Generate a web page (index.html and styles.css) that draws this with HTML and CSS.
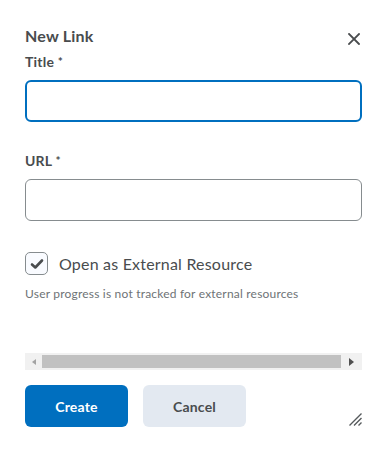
FILE: index.html
```html
<!DOCTYPE html>
<html lang="en">
  <head>
    <meta charset="UTF-8" />
    <meta name="viewport" content="width=device-width, initial-scale=1.0" />
    <title>New Link</title>
    <link rel="stylesheet" href="styles.css">
  </head>
  <body>
    <div class="dialog">
      <div class="dialog-header">
        <h2>New Link</h2>
        <button class="close-btn" aria-label="Close">
          <svg width="12" height="12" viewBox="0 0 12 12">
            <path d="M1 1 L11 11 M11 1 L1 11" stroke="#494c4e" stroke-width="1.8" stroke-linecap="square" />
          </svg>
        </button>
      </div>

      <label class="field-label" for="title">Title <span class="req">*</span></label>
      <input id="title" class="text-input focused" type="text" />

      <label class="field-label url-label" for="url">URL <span class="req">*</span></label>
      <input id="url" class="text-input" type="text" />

      <div class="check-row">
        <span class="checkbox">
          <svg width="14" height="12" viewBox="0 0 14 12">
            <path d="M2 6.5 L5.3 9.5 L12 2.5" fill="none" stroke="#494c4e" stroke-width="2.6" stroke-linecap="round" stroke-linejoin="round" />
          </svg>
        </span>
        <span class="check-label">Open as External Resource</span>
      </div>
      <p class="helper">User progress is not tracked for external resources</p>

      <div class="hscroll">
        <span class="arrow left"></span>
        <span class="thumb"></span>
        <span class="arrow right"></span>
      </div>

      <div class="footer">
        <button class="btn primary">Create</button>
        <button class="btn secondary">Cancel</button>
        <svg class="resize" width="13" height="13" viewBox="0 0 13 13">
          <path d="M0.5 12.5 L12.5 0.5 M5 12.5 L12.5 5 M9.5 12.5 L12.5 9.5" stroke="#565a5c" stroke-width="1.4" />
        </svg>
      </div>
    </div>
  </body>
</html>
```

FILE: styles.css
```css
:root {
  --text: #494c4e;
  --muted: #6e7376;
  --blue: #006fbf;
  --border: #868c8f;
  --cancel-bg: #e3e9f1;
}

* {
  margin: 0;
  padding: 0;
  box-sizing: border-box;
  font-family: Lato, "Noto Sans", sans-serif;
}

body {
  background: #ffffff;
  color: var(--text);
  letter-spacing: 0.2px;
}

.dialog {
  padding: 26px 27px 0 25px;
}

.dialog-header {
  display: flex;
  justify-content: space-between;
  align-items: flex-start;
}

.dialog-header h2 {
  font-size: 16px;
  font-weight: 700;
  line-height: 19px;
}

.close-btn {
  background: none;
  border: none;
  margin-top: 7px;
  margin-right: 2px;
  display: flex;
}

.field-label {
  display: block;
  margin-top: 8px;
  font-size: 14px;
  font-weight: 700;
  line-height: 17px;
}

.field-label .req {
  font-size: 12px;
  vertical-align: 1px;
}

.url-label {
  margin-top: 30px;
}

.text-input {
  display: block;
  width: 100%;
  height: 42px;
  margin-top: 10px;
  border: 1px solid var(--border);
  border-radius: 6px;
  background: #fff;
}

.text-input.focused {
  border: 2px solid var(--blue);
}

.check-row {
  display: flex;
  align-items: center;
  gap: 11px;
  margin-top: 31px;
}

.checkbox {
  width: 23px;
  height: 23px;
  border: 1px solid var(--border);
  border-radius: 5px;
  background: #f9fbff;
  display: flex;
  align-items: center;
  justify-content: center;
}

.check-label {
  font-size: 16px;
  line-height: 22px;
}

.helper {
  margin-top: 12px;
  font-size: 12px;
  line-height: 14px;
  color: var(--muted);
}

.hscroll {
  margin-top: 52px;
  height: 17px;
  background: #f1f1f1;
  display: flex;
  align-items: center;
}

.hscroll .thumb {
  flex: 1;
  height: 13px;
  background: #c1c1c1;
}

.hscroll .arrow {
  width: 17px;
  display: flex;
  justify-content: center;
}

.hscroll .arrow.left::before {
  content: "";
  border-top: 3.5px solid transparent;
  border-bottom: 3.5px solid transparent;
  border-right: 4px solid #a3a3a3;
}

.hscroll .arrow.right {
  width: 21px;
}

.hscroll .arrow.right::before {
  content: "";
  border-top: 4px solid transparent;
  border-bottom: 4px solid transparent;
  border-left: 5px solid #505050;
}

.footer {
  display: flex;
  gap: 15px;
  margin-top: 15px;
}

.btn {
  width: 103px;
  height: 42px;
  border: none;
  border-radius: 6px;
  font-size: 14px;
  font-weight: 700;
  letter-spacing: 0.2px;
}

.btn.primary {
  background: var(--blue);
  color: #fff;
}

.btn.secondary {
  background: var(--cancel-bg);
  color: var(--text);
}

.resize {
  margin-left: auto;
  align-self: flex-end;
  margin-bottom: 1px;
}
```
